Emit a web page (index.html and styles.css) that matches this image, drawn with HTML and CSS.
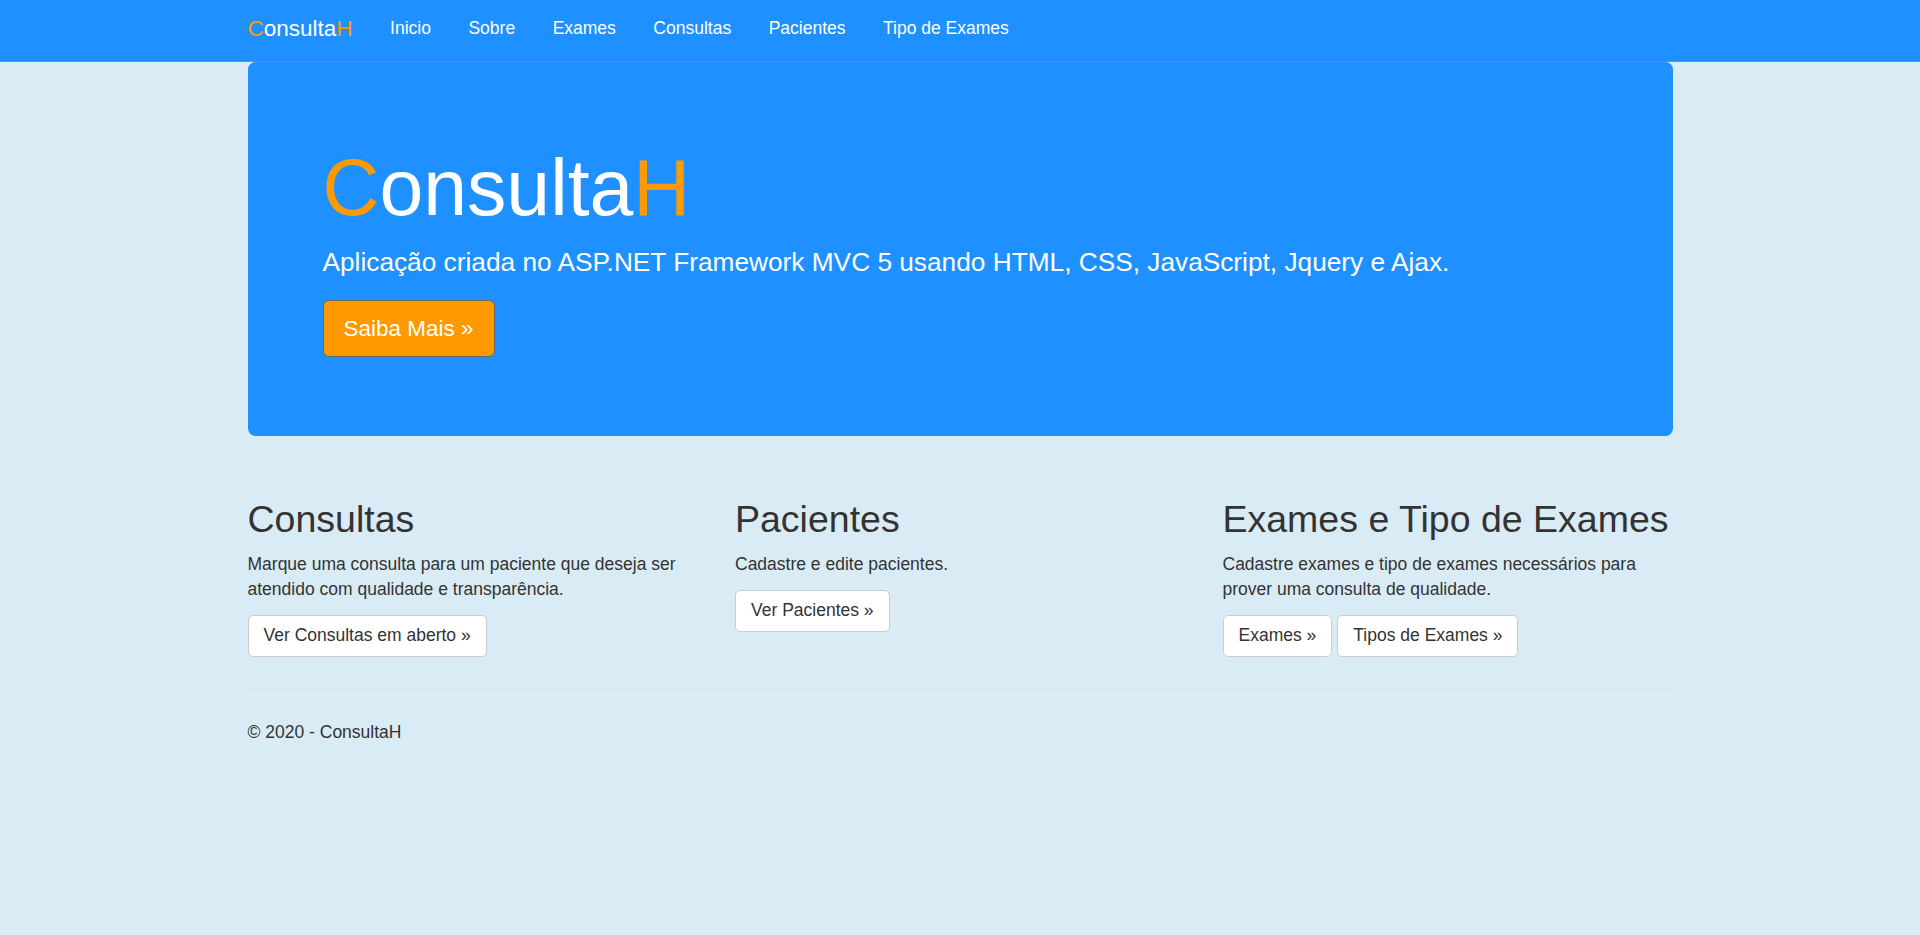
FILE: index.html
```html
<!DOCTYPE html>
<html lang="pt-br">
<head>
<meta charset="utf-8">
<title>ConsultaH</title>
<link rel="stylesheet" href="styles.css">
</head>
<body>
<header class="navbar">
  <div class="container nav-inner">
    <a class="brand" href="#"><span class="accent">C</span>onsulta<span class="accent">H</span></a>
    <ul class="nav-links">
      <li><a href="#">Inicio</a></li>
      <li><a href="#">Sobre</a></li>
      <li><a href="#">Exames</a></li>
      <li><a href="#">Consultas</a></li>
      <li><a href="#">Pacientes</a></li>
      <li><a href="#">Tipo de Exames</a></li>
    </ul>
  </div>
</header>
<main class="container body-content">
  <section class="jumbotron">
    <h1><span class="accent">C</span>onsulta<span class="accent">H</span></h1>
    <p class="lead">Aplicação criada no ASP.NET Framework MVC 5 usando HTML, CSS, JavaScript, Jquery e Ajax.</p>
    <p class="cta-wrap"><a class="btn-lg" href="#">Saiba Mais &raquo;</a></p>
  </section>
  <div class="row">
    <div class="col">
      <h2>Consultas</h2>
      <p>Marque uma consulta para um paciente que deseja ser atendido com qualidade e transparência.</p>
      <p><a class="btn" href="#">Ver Consultas em aberto &raquo;</a></p>
    </div>
    <div class="col">
      <h2>Pacientes</h2>
      <p>Cadastre e edite pacientes.</p>
      <p><a class="btn" href="#">Ver Pacientes &raquo;</a></p>
    </div>
    <div class="col">
      <h2>Exames e Tipo de Exames</h2>
      <p>Cadastre exames e tipo de exames necessários para prover uma consulta de qualidade.</p>
      <p class="btn-row"><a class="btn" href="#">Exames &raquo;</a><a class="btn" href="#">Tipos de Exames &raquo;</a></p>
    </div>
  </div>
  <hr class="divider">
  <footer class="footer">
    <p>&copy; 2020 - ConsultaH</p>
  </footer>
</main>
</body>
</html>
```
FILE: styles.css
```css
* { box-sizing: border-box; }
html, body { margin: 0; padding: 0; }
body {
  background: #d9ecf6;
  color: #333333;
  font-family: "Liberation Sans", Arial, Helvetica, sans-serif;
  font-size: 17.5px;
  line-height: 25px;
}
a { text-decoration: none; }
.accent { color: #ff9900; }

.container {
  width: 1462.5px;
  margin: 0 auto;
  padding: 0 18.75px;
}

.navbar {
  background: #1e90ff;
  height: 62px;
  border-bottom: 1px solid #7c8e9e;
}
.nav-inner {
  display: flex;
  align-items: flex-start;
}
.brand {
  color: #ffffff;
  font-size: 22.5px;
  line-height: 25px;
  padding: 16px 18.75px;
  margin-left: -18.75px;
}
.nav-links {
  display: flex;
  list-style: none;
  margin: 0;
  padding: 0;
}
.nav-links a {
  display: block;
  color: #ffffff;
  font-size: 17.5px;
  line-height: 25px;
  padding: 16px 18.75px;
}

.jumbotron {
  background: #1e90ff;
  border-radius: 7.5px;
  padding: 58px 75px 60px;
  margin-bottom: 37.5px;
  color: #ffffff;
}
.jumbotron h1 {
  font-size: 78.75px;
  line-height: 86.6px;
  font-weight: 500;
  margin: 25px 0 12.5px;
}
.jumbotron .lead {
  font-size: 26.25px;
  line-height: 37.5px;
  margin: 0 0 18.75px;
}
.jumbotron .cta-wrap {
  margin: 0 0 18.75px;
  font-size: 26.25px;
}
.btn-lg {
  display: inline-block;
  background: #ff9900;
  color: #ffffff;
  font-size: 22.5px;
  line-height: 30px;
  padding: 12.5px 20px;
  border: 1.25px solid #6f6656;
  border-radius: 6px;
}

.row {
  display: grid;
  grid-template-columns: repeat(3, 1fr);
  margin: 0 -18.75px;
}
.col {
  padding: 0 18.75px;
}
.col h2 {
  font-size: 37.5px;
  line-height: 41.25px;
  font-weight: 500;
  margin: 25px 0 12.5px;
}
.col p {
  margin: 0 0 12.5px;
}
.btn {
  display: inline-block;
  background: #ffffff;
  color: #333333;
  font-size: 17.5px;
  line-height: 25px;
  padding: 7.5px 15px;
  border: 1.25px solid #cccccc;
  border-radius: 5px;
}
.btn-row {
  display: flex;
  gap: 5px;
}

.divider {
  border: 0;
  border-top: 1.25px solid #e4f1f8;
  margin: 25px 0;
}
.footer p {
  margin: 0 0 12.5px;
}
```
